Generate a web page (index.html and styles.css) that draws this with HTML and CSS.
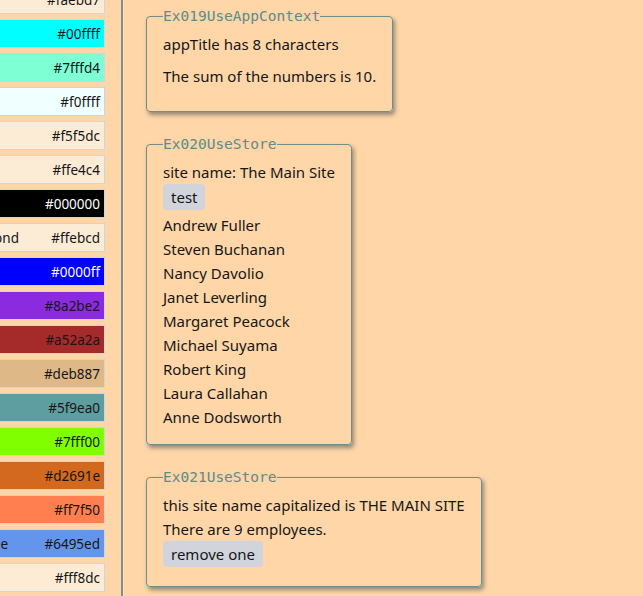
FILE: index.html
```html
<!DOCTYPE html>
<html>
<head>
<meta charset="utf-8">
<link rel="stylesheet" href="styles.css">
</head>
<body>
<div class="layout">
  <aside class="sidebar">
    <div class="swatches">
      <div class="swatch" style="background:#fcecd6"><span>antiquewhite</span><span>#faebd7</span></div>
      <div class="swatch" style="background:#00ffff"><span>aqua</span><span>#00ffff</span></div>
      <div class="swatch" style="background:#7fffd4"><span>aquamarine</span><span>#7fffd4</span></div>
      <div class="swatch" style="background:#f0ffff"><span>azure</span><span>#f0ffff</span></div>
      <div class="swatch" style="background:#fcecd6"><span>beige</span><span>#f5f5dc</span></div>
      <div class="swatch" style="background:#fcecd6"><span>bisque</span><span>#ffe4c4</span></div>
      <div class="swatch swatch-light-text" style="background:#000000"><span>black</span><span>#000000</span></div>
      <div class="swatch" style="background:#fcecd6"><span>blanchedalmond</span><span>#ffebcd</span></div>
      <div class="swatch swatch-light-text" style="background:#0000ff"><span>blue</span><span>#0000ff</span></div>
      <div class="swatch" style="background:#8a2be2"><span>blueviolet</span><span>#8a2be2</span></div>
      <div class="swatch" style="background:#a52a2a"><span>brown</span><span>#a52a2a</span></div>
      <div class="swatch" style="background:#deb887"><span>burlywood</span><span>#deb887</span></div>
      <div class="swatch" style="background:#5f9ea0"><span>cadetblue</span><span>#5f9ea0</span></div>
      <div class="swatch" style="background:#7fff00"><span>chartreuse</span><span>#7fff00</span></div>
      <div class="swatch" style="background:#d2691e"><span>chocolate</span><span>#d2691e</span></div>
      <div class="swatch" style="background:#ff7f50"><span>coral</span><span>#ff7f50</span></div>
      <div class="swatch" style="background:#6495ed"><span>cornflowerblue</span><span>#6495ed</span></div>
      <div class="swatch" style="background:#fcecd6"><span>cornsilk</span><span>#fff8dc</span></div>
      <div class="swatch" style="background:#dc143c"><span>crimson</span><span>#dc143c</span></div>
    </div>
  </aside>
  <main class="main">
    <fieldset class="demo">
      <legend class="demo-title">Ex019UseAppContext</legend>
      <p class="line para">appTitle has 8 characters</p>
      <p class="line para">The sum of the numbers is 10.</p>
    </fieldset>

    <fieldset class="demo">
      <legend class="demo-title">Ex020UseStore</legend>
      <div class="line">site name: The Main Site</div>
      <button class="btn">test</button>
      <ul class="names">
        <li class="line">Andrew Fuller</li>
        <li class="line">Steven Buchanan</li>
        <li class="line">Nancy Davolio</li>
        <li class="line">Janet Leverling</li>
        <li class="line">Margaret Peacock</li>
        <li class="line">Michael Suyama</li>
        <li class="line">Robert King</li>
        <li class="line">Laura Callahan</li>
        <li class="line">Anne Dodsworth</li>
      </ul>
    </fieldset>

    <fieldset class="demo">
      <legend class="demo-title">Ex021UseStore</legend>
      <div class="line">this site name capitalized is THE MAIN SITE</div>
      <div class="line">There are 9 employees.</div>
      <button class="btn btn-last">remove one</button>
    </fieldset>
  </main>
</div>
</body>
</html>
```
FILE: styles.css
```css
html, body {
  margin: 0;
  padding: 0;
  height: 100%;
}

body {
  background: #fed6a8;
  color: #161616;
  font-family: "Noto Sans", "DejaVu Sans", sans-serif;
  font-size: 15px;
  overflow: hidden;
}

.layout {
  display: flex;
  height: 100vh;
}

/* ---------- colour list (scrolled sidebar) ---------- */
.sidebar {
  flex: 0 0 auto;
  width: 105px;
  padding-right: 16px;
  overflow: hidden;
  border-right: 2px solid #7e8e8b;
  box-shadow: -2px 0 0 #f6cd9f, 1px 0 0 #ffe2bf;
}

.swatches {
  display: flex;
  flex-direction: column;
  align-items: flex-end;
  gap: 5px;
  margin-top: -15px;
}

.swatch {
  flex: 0 0 auto;
  box-sizing: border-box;
  width: 198px;
  height: 29px;
  padding: 0 4px 0 4px;
  border: 1px solid #cdd6de;
  display: flex;
  align-items: center;
  justify-content: space-between;
  font-size: 13.5px;
  color: #161616;
  white-space: nowrap;
}

.swatch-light-text {
  color: #ffffff;
}

/* ---------- demos ---------- */
.main {
  flex: 1 1 auto;
  padding: 8px 0 0 23px;
  overflow: hidden;
}

.demo {
  display: block;
  width: fit-content;
  min-width: 0;
  margin: 0 0 24px 0;
  padding: 7px 16px 15px 16px;
  border: 1px solid #6f8e8b;
  border-radius: 4px;
  box-shadow: 2px 3px 4px rgba(60, 75, 75, 0.55);
}

.demo-title {
  padding: 0;
  font-family: "DejaVu Sans Mono", monospace;
  font-size: 14.5px;
  line-height: 17px;
  color: #5e8b89;
}

.line {
  margin: 0;
  line-height: 24px;
  white-space: nowrap;
}

.para + .para {
  margin-top: 8px;
}

.para:last-of-type {
  margin-bottom: 8px;
}

.btn {
  display: block;
  margin: 0;
  padding: 3px 8px;
  border: none;
  border-radius: 4px;
  background: #d1d5db;
  color: #161616;
  font-family: inherit;
  font-size: 15px;
  line-height: 20px;
}

.btn-last {
  margin-bottom: 4px;
}

.names {
  list-style: none;
  margin: 3px 0 0 0;
  padding: 0;
}
```
